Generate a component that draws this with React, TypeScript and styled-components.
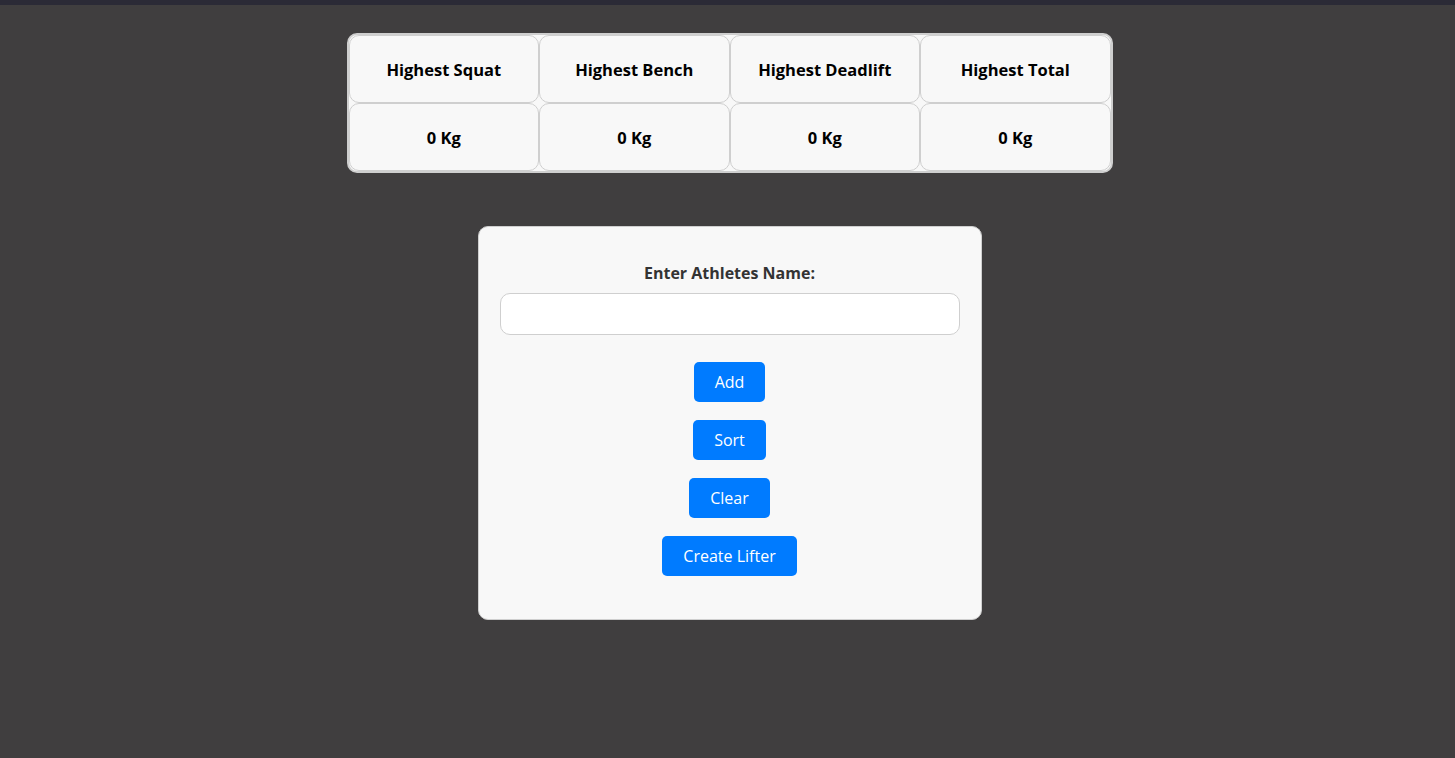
import React from "react";
import styled, { createGlobalStyle } from "styled-components";

const Global = createGlobalStyle`
  html, body { margin: 0; padding: 0; background: #403e3f; }
  body { font-family: "Open Sans", "Noto Sans", sans-serif; min-height: 758px; }
`;

const TopBar = styled.div`
  height: 5px;
  background: #2b2a36;
`;

const Page = styled.main`
  display: flex;
  flex-direction: column;
  align-items: center;
  padding: 28px 0 0 4px;
`;

const StatsTable = styled.table`
  width: 766px;
  border-collapse: separate;
  border-spacing: 0;
  border: 2px solid #cfcfcf;
  border-radius: 10px;
  background: #f8f8f8;
  table-layout: fixed;
`;

const Cell = styled.td`
  height: 68px;
  box-sizing: border-box;
  border: 1px solid #cfcfcf;
  border-radius: 10px;
  background: #f8f8f8;
  text-align: center;
  font-weight: 700;
  font-size: 16.5px;
  color: #000;
  padding: 0;
`;

const Card = styled.section`
  margin-top: 53px;
  width: 504px;
  box-sizing: border-box;
  background: #f8f8f8;
  border: 1px solid #cfcfcf;
  border-radius: 10px;
  padding: 35px 21px 43px;
  display: flex;
  flex-direction: column;
  align-items: center;
`;

const Label = styled.label`
  font-weight: 700;
  font-size: 16px;
  color: #333;
  line-height: 22px;
  margin-bottom: 9px;
`;

const Input = styled.input`
  width: 100%;
  height: 42px;
  box-sizing: border-box;
  border: 1px solid #cfcfcf;
  border-radius: 10px;
  background: #fff;
  font-size: 16px;
  padding: 0 10px;
  margin-bottom: 27px;
`;

const Buttons = styled.div`
  display: flex;
  flex-direction: column;
  align-items: center;
  gap: 18px;
`;

const Button = styled.button`
  background: #007bff;
  color: #fff;
  border: none;
  border-radius: 5px;
  height: 40px;
  padding: 0 21px;
  font-family: "Open Sans", "Noto Sans", sans-serif;
  font-size: 16px;
  cursor: pointer;
`;

const heads = ["Highest Squat", "Highest Bench", "Highest Deadlift", "Highest Total"];

export default function App() {
  return (
    <>
      <Global />
      <TopBar />
      <Page>
        <StatsTable>
          <tbody>
            <tr>
              {heads.map((h) => (
                <Cell key={h}>{h}</Cell>
              ))}
            </tr>
            <tr>
              {heads.map((h) => (
                <Cell key={h}>0 Kg</Cell>
              ))}
            </tr>
          </tbody>
        </StatsTable>
        <Card>
          <Label htmlFor="name">Enter Athletes Name:</Label>
          <Input id="name" type="text" />
          <Buttons>
            <Button>Add</Button>
            <Button>Sort</Button>
            <Button>Clear</Button>
            <Button>Create Lifter</Button>
          </Buttons>
        </Card>
      </Page>
    </>
  );
}
